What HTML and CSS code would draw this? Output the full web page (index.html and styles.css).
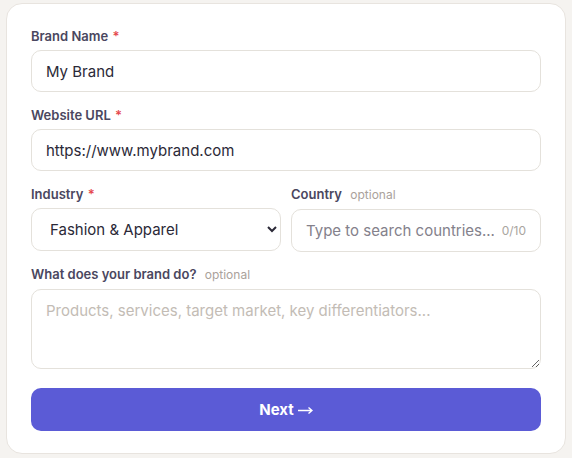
FILE: index.html
```html
<!DOCTYPE html>
<html lang="en">
<head>
  <meta charset="UTF-8">
  <title>Brand setup</title>
  <link rel="stylesheet" href="styles.css">
</head>
<body>
  <form class="card" onsubmit="return false">
    <div class="field">
      <label class="label" for="brandName">Brand Name <span class="req">*</span></label>
      <input class="input" id="brandName" type="text" value="My Brand">
    </div>

    <div class="field">
      <label class="label" for="website">Website URL <span class="req">*</span></label>
      <input class="input" id="website" type="text" value="https://www.mybrand.com">
    </div>

    <div class="row">
      <div class="field">
        <label class="label" for="industry">Industry <span class="req">*</span></label>
        <select class="input select" id="industry">
          <option>Fashion &amp; Apparel</option>
          <option>Beauty</option>
          <option>Technology</option>
        </select>
      </div>
      <div class="field">
        <label class="label" for="country">Country <span class="opt">optional</span></label>
        <div class="input search">
          <input id="country" type="text" placeholder="Type to search countries...">
          <span class="count">0/10</span>
        </div>
      </div>
    </div>

    <div class="field">
      <label class="label" for="about">What does your brand do? <span class="opt">optional</span></label>
      <textarea class="input area" id="about" placeholder="Products, services, target market, key differentiators..."></textarea>
    </div>

    <button class="next" type="submit">
      Next
      <svg class="arrow" width="15" height="9" viewBox="0 0 15 9" fill="none" stroke="currentColor" stroke-width="1.4">
        <path d="M0 4.5h14M10.5 1.5l3.5 3-3.5 3"/>
      </svg>
    </button>
  </form>
</body>
</html>
```

FILE: styles.css
```css
* {
  box-sizing: border-box;
}

html, body {
  margin: 0;
  padding: 0;
  background: #f5f3f0;
  font-family: Inter, "Noto Sans", sans-serif;
}

body {
  padding: 3px 6px;
}

.card {
  width: 560px;
  background: #fff;
  border: 1px solid #e8e4df;
  border-radius: 16px;
  padding: 24px 24px 22px;
  display: flex;
  flex-direction: column;
  gap: 15px;
}

.field {
  display: flex;
  flex-direction: column;
  min-width: 0;
}

.label {
  font-size: 13px;
  line-height: 16px;
  font-weight: 600;
  color: #4a4760;
  margin-bottom: 6px;
}

.req {
  color: #e5484d;
  margin-left: 1px;
}

.opt {
  font-size: 12px;
  font-weight: 400;
  color: #aaa29b;
  margin-left: 5px;
}

.input {
  height: 42px;
  border: 1px solid #e4e1db;
  border-radius: 10px;
  background: #fff;
  padding: 0 14px;
  font-family: inherit;
  font-size: 15px;
  color: #2b2937;
  outline: none;
}

.row {
  display: grid;
  grid-template-columns: 1fr 1fr;
  gap: 10px;
  margin-bottom: -1px;
}

.row .input {
  height: 43px;
}

.select {
  padding: 0 8px 0 14px;
}

.search {
  display: flex;
  align-items: center;
  gap: 8px;
}

.search input {
  flex: 1;
  min-width: 0;
  border: 0;
  outline: none;
  padding: 0;
  font-family: inherit;
  font-size: 15px;
  color: #2b2937;
}

.search input::placeholder {
  color: #84818b;
}

.count {
  font-size: 12px;
  color: #a9a5a0;
}

.area {
  height: 80px;
  padding: 11px 14px;
  line-height: 20px;
  resize: vertical;
}

.area::placeholder {
  color: #c3bcb5;
}

.next {
  margin-top: 4px;
  height: 43px;
  border: 0;
  border-radius: 10px;
  background: #5b5bd6;
  color: #fff;
  font-family: inherit;
  font-size: 15px;
  font-weight: 700;
  cursor: pointer;
  display: flex;
  align-items: center;
  justify-content: center;
  gap: 4px;
}

.arrow {
  margin-top: 1px;
}
```
